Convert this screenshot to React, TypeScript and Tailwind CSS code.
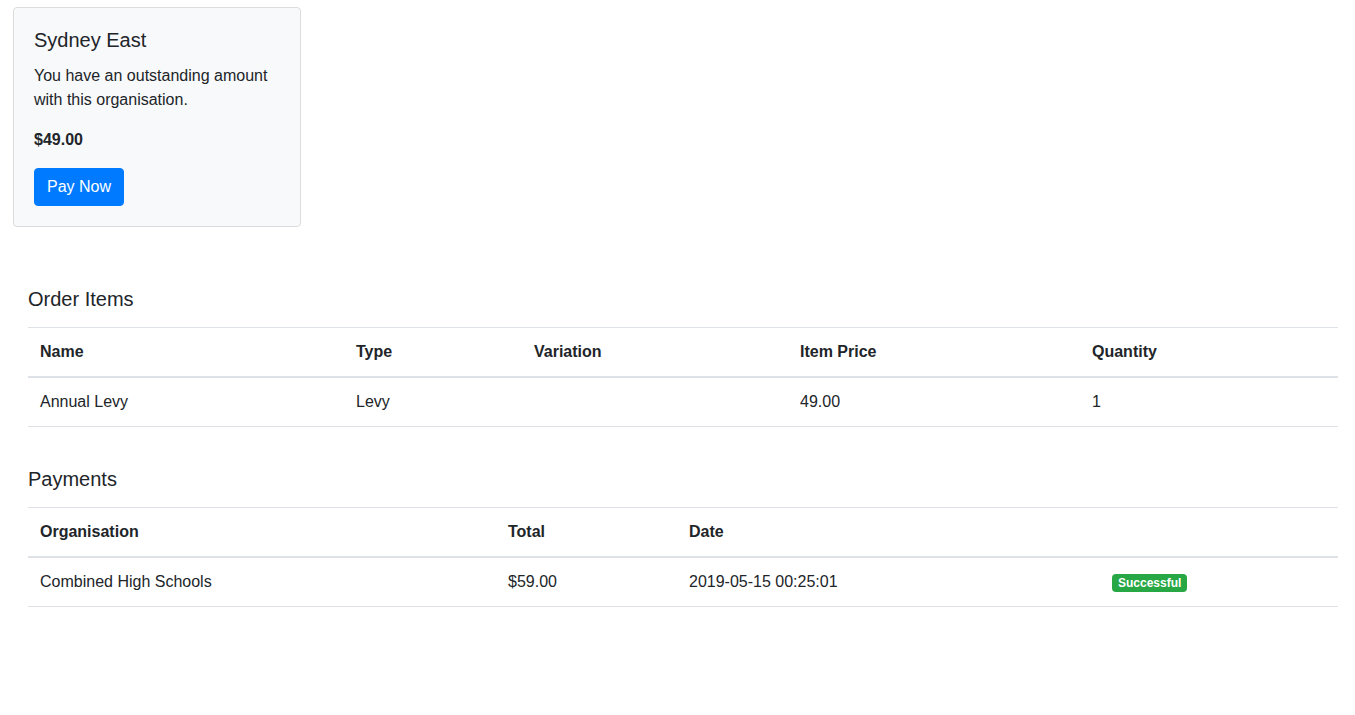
export default function App() {
  const th = 'px-3 py-3 text-left font-bold border-t border-b-2 border-[#dee2e6] align-bottom';
  const td = 'px-3 py-3 border-t border-[#dee2e6] border-b align-top';

  return (
    <div className="min-h-screen bg-white text-[#212529] text-base leading-6 font-['Liberation_Sans',Arial,sans-serif]">
      {/* Outstanding card */}
      <div className="pt-[7px] pl-[13px]">
        <div className="w-[288px] rounded border border-[#dcdcdc] bg-[#f8f9fa] p-5">
          <h5 className="mb-3 text-xl leading-6 font-medium">Sydney East</h5>
          <p className="mb-4">You have an outstanding amount with this organisation.</p>
          <p className="mb-4 font-bold">$49.00</p>
          <button className="rounded bg-[#007bff] px-3 py-1.5 leading-6 text-white border border-[#007bff]">
            Pay Now
          </button>
        </div>
      </div>

      <div className="pl-7 pr-[17px]">
        {/* Order items */}
        <h5 className="mt-[60px] mb-4 text-xl leading-6 font-medium">Order Items</h5>
        <table className="w-full table-fixed border-collapse">
          <colgroup>
            <col className="w-[316px]" />
            <col className="w-[178px]" />
            <col className="w-[266px]" />
            <col className="w-[292px]" />
            <col />
          </colgroup>
          <thead>
            <tr>
              <th className={th}>Name</th>
              <th className={th}>Type</th>
              <th className={th}>Variation</th>
              <th className={th}>Item Price</th>
              <th className={th}>Quantity</th>
            </tr>
          </thead>
          <tbody>
            <tr>
              <td className={td}>Annual Levy</td>
              <td className={td}>Levy</td>
              <td className={td}></td>
              <td className={td}>49.00</td>
              <td className={td}>1</td>
            </tr>
          </tbody>
        </table>

        {/* Payments */}
        <h5 className="mt-10 mb-4 text-xl leading-6 font-medium">Payments</h5>
        <table className="w-full table-fixed border-collapse">
          <colgroup>
            <col className="w-[468px]" />
            <col className="w-[181px]" />
            <col className="w-[423px]" />
            <col />
          </colgroup>
          <thead>
            <tr>
              <th className={th}>Organisation</th>
              <th className={th}>Total</th>
              <th className={th}>Date</th>
              <th className={th}></th>
            </tr>
          </thead>
          <tbody>
            <tr>
              <td className={td}>Combined High Schools</td>
              <td className={td}>$59.00</td>
              <td className={td}>2019-05-15 00:25:01</td>
              <td className={td}>
                <span className="inline-block rounded bg-[#28a745] px-[6px] py-[3px] text-xs leading-[12px] font-bold text-white align-middle">
                  Successful
                </span>
              </td>
            </tr>
          </tbody>
        </table>
      </div>
    </div>
  );
}
